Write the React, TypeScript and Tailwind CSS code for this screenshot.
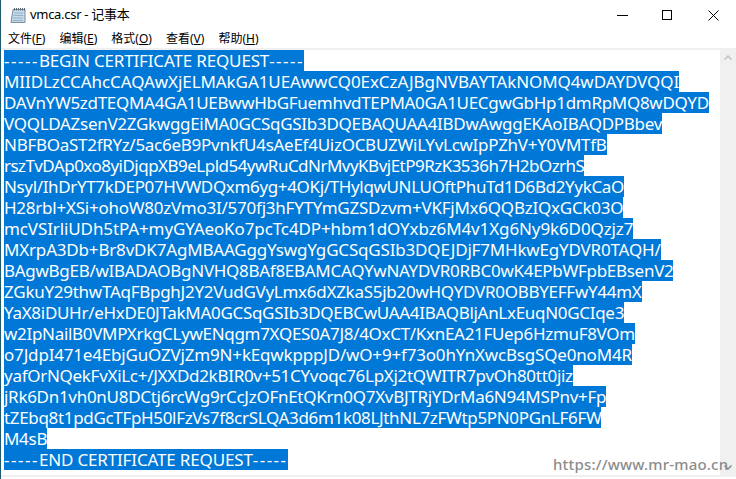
const lines = [
  ["MIIDLzCCAhcCAQAwXjELMAkGA1UEAwwCQ0ExCzAJBgNVBAYTAkNOMQ4wDAYDVQQI", "tracking-[-0.08px]"],
  ["DAVnYW5zdTEQMA4GA1UEBwwHbGFuemhvdTEPMA0GA1UECgwGbHp1dmRpMQ8wDQYD", "tracking-[-0.3px]"],
  ["VQQLDAZsenV2ZGkwggEiMA0GCSqGSIb3DQEBAQUAA4IBDwAwggEKAoIBAQDPBbev", "tracking-[-0.3px]"],
  ["NBFBOaST2fRYz/5ac6eB9PvnkfU4sAeEf4UizOCBUZWiLYvLcwIpPZhV+Y0VMTfB", "tracking-[-0.27px]"],
  ["rszTvDAp0xo8yiDjqpXB9eLpld54ywRuCdNrMvyKBvjEtP9RzK3536h7H2bOzrhS", "tracking-[-0.52px]"],
  ["Nsyl/IhDrYT7kDEP07HVWDQxm6yg+4OKj/THylqwUNLUOftPhuTd1D6Bd2YykCaO", "tracking-[-0.35px]"],
  ["H28rbl+XSi+ohoW80zVmo3I/570fj3hFYTYmGZSDzvm+VKFjMx6QQBzIQxGCk03O", "tracking-[-0.24px]"],
  ["mcVSIrliUDh5tPA+myGYAeoKo7pcTc4DP+hbm1dOYxbz6M4v1Xg6Ny9k6D0Qzjz7", "tracking-[-0.11px]"],
  ["MXrpA3Db+Br8vDK7AgMBAAGggYswgYgGCSqGSIb3DQEJDjF7MHkwEgYDVR0TAQH/", "tracking-[-0.18px]"],
  ["BAgwBgEB/wIBADAOBgNVHQ8BAf8EBAMCAQYwNAYDVR0RBC0wK4EPbWFpbEBsenV2", "tracking-[-0.29px]"],
  ["ZGkuY29thwTAqFBpghJ2Y2VudGVyLmx6dXZkaS5jb20wHQYDVR0OBBYEFFwY44mX", "tracking-[-0.27px]"],
  ["YaX8iDUHr/eHxDE0JTakMA0GCSqGSIb3DQEBCwUAA4IBAQBljAnLxEuqN0GCIqe3", "tracking-[-0.3px]"],
  ["w2IpNailB0VMPXrkgCLywENqgm7XQES0A7J8/4OxCT/KxnEA21FUep6HzmuF8VOm", "tracking-[-0.31px]"],
  ["o7JdpI471e4EbjGuOZVjZm9N+kEqwkpppJD/wO+9+f73o0hYnXwcBsgSQe0noM4R", "tracking-[-0.18px]"],
  ["yafOrNQekFvXiLc+/JXXDd2kBIR0v+51CYvoqc76LpXj2tQWITR7pvOh80tt0jiz", "tracking-[-0.29px]"],
  ["jRk6Dn1vh0nU8DCtj6rcWg9rCcJzOFnEtQKrn0Q7XvBJTRjYDrMa6N94MSPnv+Fp", "tracking-[-0.29px]"],
  ["tZEbq8t1pdGcTFpH50lFzVs7f8crSLQA3d6m1k08LJthNL7zFWtp5PN0PGnLF6FW", "tracking-[-0.33px]"],
  ["M4sB", "tracking-[-0.3px]"],
];

const menus = [
  ["文件(", "F", ")"],
  ["编辑(", "E", ")"],
  ["格式(", "O", ")"],
  ["查看(", "V", ")"],
  ["帮助(", "H", ")"],
];

const NotepadIcon = () => (
  <svg width="16" height="17" viewBox="0 0 16 17" className="shrink-0">
    <path d="M3 2.5h12v13H1z" fill="#c4dbec" stroke="#7d8c99" strokeWidth="1" />
    <path d="M4 6h9M3.5 8.5h9.5M3 11h10M2.6 13.5h10" stroke="#94afc4" strokeWidth="1" />
    <path d="M4.5 1v2.5M6.5 1v2.5M8.5 1v2.5M10.5 1v2.5M12.5 1v2.5M14.5 1v2.5" stroke="#59656e" strokeWidth="1" />
  </svg>
);

const Marker = ({ label }: { label: string }) => (
  <div className="h-[21px]">
    <span className="inline-block h-[21px] bg-[#0078d7]">
      <span className="tracking-[1.5px]">-----</span>
      <span className="tracking-[-0.16px]">{label}</span>
      <span className="tracking-[1.5px]">-----</span>
    </span>
  </div>
);

export default function App() {
  return (
    <div className="relative flex h-[479px] w-[736px] flex-col overflow-hidden border-l border-[#1f5a6e] bg-white font-['Noto_Sans','Noto_Sans_CJK_SC',sans-serif] text-black">
      <div className="flex h-[30px] items-center pl-[9px]">
        <NotepadIcon />
        <span className="ml-[4px] text-[13px] tracking-[-0.3px]">vmca.csr - 记事本</span>
        <div className="ml-auto flex items-center">
          <svg width="11" height="11" viewBox="0 0 11 11" className="mr-[34px]">
            <path d="M0 5.5h11" stroke="#000" strokeWidth="1" />
          </svg>
          <svg width="11" height="11" viewBox="0 0 11 11" className="mr-[35px]">
            <rect x="0.5" y="0.5" width="9" height="9" fill="none" stroke="#000" strokeWidth="1" />
          </svg>
          <svg width="11" height="11" viewBox="0 0 11 11" className="mr-[17px]">
            <path d="M0.5 0.5l10 10M10.5 0.5l-10 10" stroke="#000" strokeWidth="1" />
          </svg>
        </div>
      </div>
      <div className="flex h-[18px] items-center gap-[14px] pl-[7px] text-xs">
        {menus.map(([a, k, b]) => (
          <span key={k}>
            {a}
            <span className="underline">{k}</span>
            {b}
          </span>
        ))}
      </div>
      <div className="flex h-[429px] flex-col border-t-2 border-b-2 border-[#f0f0f0]">
        <div className="flex min-h-0 flex-1">
          <div className="flex-1 pl-[3px] text-[17px] leading-[21px] whitespace-nowrap text-white">
            <Marker label="BEGIN CERTIFICATE REQUEST" />
            {lines.map(([line, spacing]) => (
              <div key={line} className="h-[21px]">
                <span className={`inline-block h-[21px] bg-[#0078d7] ${spacing}`}>{line}</span>
              </div>
            ))}
            <Marker label="END CERTIFICATE REQUEST" />
          </div>
          <div className="flex w-[16px] flex-col items-center justify-between bg-[#f0f0f0] py-[5px]">
            <svg width="8" height="5" viewBox="0 0 8 5">
              <path d="M0.5 4.5L4 1l3.5 3.5" fill="none" stroke="#c4c4c4" strokeWidth="1.5" />
            </svg>
            <svg width="8" height="5" viewBox="0 0 8 5">
              <path d="M0.5 0.5L4 4l3.5-3.5" fill="none" stroke="#8a8a8a" strokeWidth="1.5" />
            </svg>
          </div>
        </div>
      </div>
      <span className="absolute top-[454px] left-[552px] text-[15px] leading-[20px] font-medium tracking-[0.2px] whitespace-nowrap text-[#8c8c8c]">
        https://www.mr-mao.cn
      </span>
    </div>
  );
}
